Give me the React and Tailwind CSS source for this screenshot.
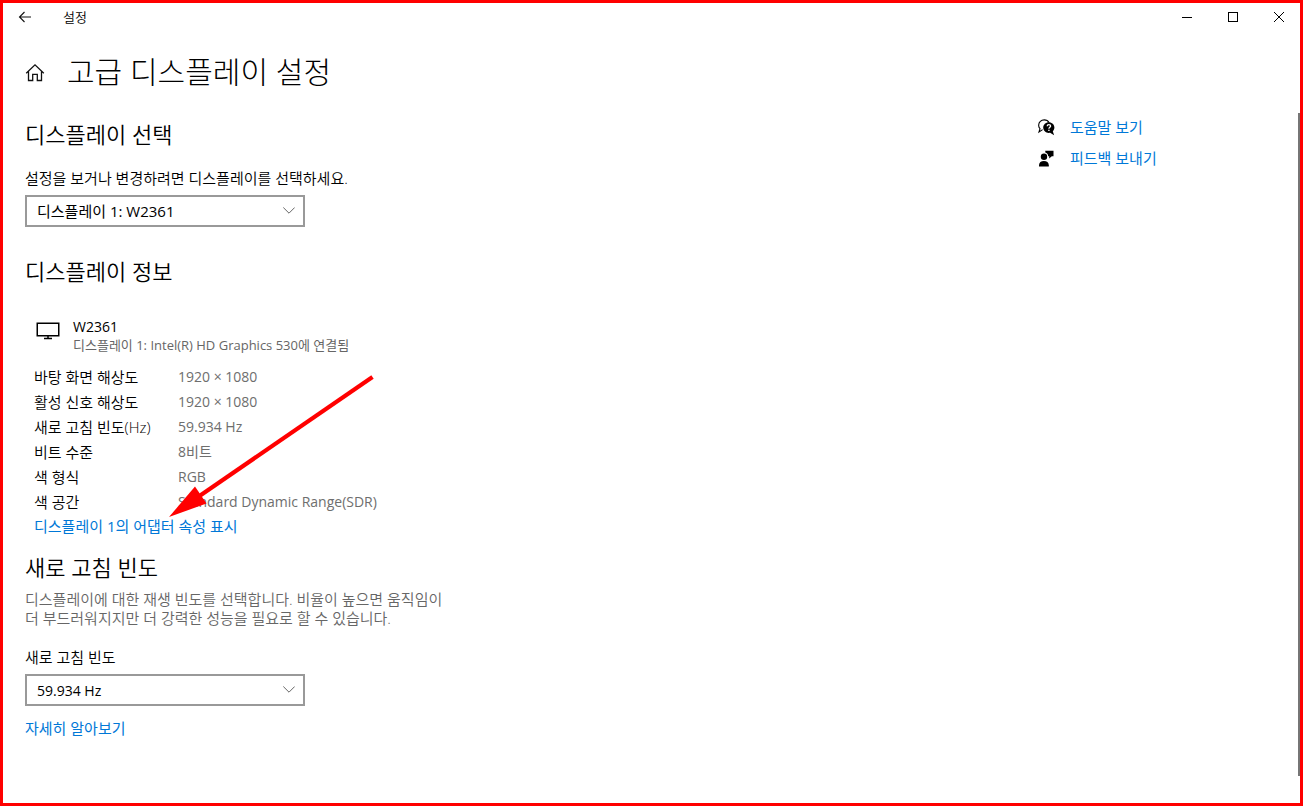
import React from "react";

const details = [
  ["바탕 화면 해상도", "1920 × 1080"],
  ["활성 신호 해상도", "1920 × 1080"],
  ["새로 고침 빈도(Hz)", "59.934 Hz"],
  ["비트 수준", "8비트"],
  ["색 형식", "RGB"],
  ["색 공간", "Standard Dynamic Range(SDR)"],
];

function TitleBar() {
  return (
    <header className="flex h-7 items-center">
      <button type="button" aria-label="뒤로" className="ml-4 flex h-7 w-3 items-center justify-center">
        <svg width="14" height="12" viewBox="0 0 14 12" fill="none" stroke="#111" strokeWidth="1.1" className="shrink-0">
          <path d="M13 6H1.5M6.5 1l-5 5 5 5" />
        </svg>
      </button>
      <span className="ml-8 text-[13px] leading-5">설정</span>
      <div className="ml-auto flex gap-1">
        <button type="button" aria-label="최소화" className="flex h-7 w-[42px] items-center justify-center">
          <svg width="10" height="11" viewBox="0 0 10 11" stroke="#000" shapeRendering="crispEdges">
            <path d="M0 5.5h10" />
          </svg>
        </button>
        <button type="button" aria-label="최대화" className="flex h-7 w-[42px] items-center justify-center">
          <svg width="10" height="10" viewBox="0 0 10 10" fill="none" stroke="#000" shapeRendering="crispEdges">
            <rect x="0.5" y="0.5" width="9" height="9" />
          </svg>
        </button>
        <button type="button" aria-label="닫기" className="flex h-7 w-[42px] items-center justify-center">
          <svg width="10" height="10" viewBox="0 0 10 10" stroke="#000">
            <path d="M0 0l10 10M10 0L0 10" />
          </svg>
        </button>
      </div>
    </header>
  );
}

function SelectBox({ id, value, textSize }) {
  return (
    <div className="relative w-[280px] max-w-full">
      <select
        id={id}
        className={`block h-8 w-full appearance-none border-2 border-[#999] bg-white pt-0.5 pr-8 pl-[10px] font-normal text-black ${textSize}`}
      >
        <option>{value}</option>
      </select>
      <svg
        width="12"
        height="7"
        viewBox="0 0 12 7"
        fill="none"
        stroke="#666"
        className="pointer-events-none absolute top-3 right-[10px]"
      >
        <path d="M0.3 0.5L6 6.2l5.7-5.7" />
      </svg>
    </div>
  );
}

function MonitorIcon() {
  return (
    <svg width="24" height="18" viewBox="0 0 24 18" fill="none" stroke="#000" strokeWidth="1.5" className="mt-1 shrink-0">
      <rect x="1.25" y="1.25" width="21.5" height="12.5" />
      <path d="M12 14v2.5M8 16.6h8" />
    </svg>
  );
}

function HelpIcon() {
  return (
    <svg width="17" height="17" viewBox="0 0 17 17" className="mb-0.5 shrink-0">
      <path
        d="M4.6 10.6L1 13l1-3.400A4.600 4.600 0 0 1 .7 6C.7 3 3.200 .9 6.200 .9c2.200 0 4 1 4.800 2.600"
        fill="none"
        stroke="#000"
        strokeWidth="1.1"
      />
      <path
        d="M10.800 3.200c3.100 0 5.600 2.400 5.600 5.400 0 1.500-.6 2.800-1.600 3.700l1.300 3.900-4-2.400c-.4.100-.8.100-1.300.1-3.100 0-5.600-2.400-5.600-5.300s2.500-5.400 5.600-5.400z"
        fill="#000"
      />
      <path d="M9.200 7.300c0-1 .7-1.600 1.700-1.600s1.700.6 1.700 1.400c0 1.200-1.700 1.300-1.700 2.700" fill="none" stroke="#fff" strokeWidth="1.3" />
      <rect x="10.200" y="10.700" width="1.400" height="1.300" fill="#fff" />
    </svg>
  );
}

function FeedbackIcon() {
  return (
    <svg width="17" height="17" viewBox="0 0 17 17" className="mb-0.5 shrink-0">
      <circle cx="6" cy="6.800" r="3.200" fill="#000" />
      <path d="M1 16.500v-1.300c0-2.600 2-4.200 4.900-4.200s4.900 1.600 4.900 4.200v1.300z" fill="#000" />
      <path d="M7.300 .8h8.200v5.400h-1.700l-2.600 2.200V6.200h-1c-.1-1.900-1.300-3.200-2.900-3.600z" fill="#000" />
    </svg>
  );
}

export default function App() {
  return (
    <div className="relative flex min-h-screen flex-col border-[3px] border-[#ff0000] bg-white font-['Open_Sans','Noto_Sans_CJK_KR',sans-serif] text-sm font-[350] text-black">
      <TitleBar />

      <div className="mt-[17px] flex h-12 items-center pl-[22px]">
        <a href="#home" aria-label="홈">
          <svg width="20" height="20" viewBox="0 0 20 20" fill="none" stroke="#111" strokeWidth="1.3" className="mt-0.5">
            <path d="M1.200 10.200L10 1.800l8.800 8.400M3.500 8.500v9h4.200v-6.200h4.600v6.200h4.200v-9" />
          </svg>
        </a>
        <h1 className="ml-[22px] text-[30px] leading-10 font-light">고급 디스플레이 설정</h1>
      </div>

      <div className="mt-[17px] flex flex-1 pb-[27px]">
        <main className="flex-1 pl-[22px] text-[15px]">
          <section>
            <h2 className="mt-[6px] text-[22px] leading-[30px] font-[350]">디스플레이 선택</h2>
            <label htmlFor="display" className="mt-[19px] mb-[7px] block leading-5">
              설정을 보거나 변경하려면 디스플레이를 선택하세요.
            </label>
            <SelectBox id="display" value="디스플레이 1: W2361" textSize="text-[15px]" />
          </section>

          <section className="mt-[29px]">
            <h2 className="text-[22px] leading-[30px] font-[350]">디스플레이 정보</h2>
            <div className="mt-8 flex gap-[13px] pl-[11px]">
              <MonitorIcon />
              <div className="font-normal">
                <p className="text-sm leading-[18px]">W2361</p>
                <p className="text-[13px] leading-[18px] text-[#666]">디스플레이 1: Intel(R) HD Graphics 530에 연결됨</p>
              </div>
            </div>
            <table className="mt-[10px] ml-[9px]">
              <tbody>
                {details.map(([name, value]) => (
                  <tr key={name} className="h-[25px]">
                    <th scope="row" className="w-36 p-0 text-left text-[15px] leading-5 font-[350]">
                      {name}
                    </th>
                    <td className="p-0 text-sm leading-5 font-normal text-[#6e6e6e]">{value}</td>
                  </tr>
                ))}
              </tbody>
            </table>
            <a href="#adapter" className="ml-[9px] inline-block leading-[25px] font-normal text-[#0078d7]">
              디스플레이 1의 어댑터 속성 표시
            </a>
          </section>

          <section className="mt-[13px]">
            <h2 className="text-[22px] leading-[30px] font-[350]">새로 고침 빈도</h2>
            <p className="mt-2 leading-[19px] text-[#666]">
              디스플레이에 대한 재생 빈도를 선택합니다. 비율이 높으면 움직임이
              <br />더 부드러워지지만 더 강력한 성능을 필요로 할 수 있습니다.
            </p>
            <label htmlFor="refresh" className="mt-[19px] mb-[7px] block leading-5">
              새로 고침 빈도
            </label>
            <SelectBox id="refresh" value="59.934 Hz" textSize="text-sm" />
            <a href="#learn" className="mt-3 inline-block leading-5 font-normal text-[#0078d7]">
              자세히 알아보기
            </a>
          </section>
        </main>

        <aside className="w-[260px] pt-[5px] text-[15px] font-normal">
          <a href="#help" className="flex h-5 items-center gap-[15px] text-[#0078d7]">
            <HelpIcon />
            도움말 보기
          </a>
          <a href="#feedback" className="mt-[11px] flex h-5 items-center gap-[15px] text-[#0078d7]">
            <FeedbackIcon />
            피드백 보내기
          </a>
        </aside>
        <div className="w-[2px] bg-[#767676]" />
      </div>

      <svg
        width="210"
        height="146"
        viewBox="0 0 210 146"
        className="pointer-events-none absolute top-[370px] left-[165px]"
      >
        <path d="M204.500 4L30 124" stroke="#ff0000" strokeWidth="4.200" />
        <path d="M1 144L27 113.500l11.500 17z" fill="#ff0000" />
      </svg>
    </div>
  );
}
